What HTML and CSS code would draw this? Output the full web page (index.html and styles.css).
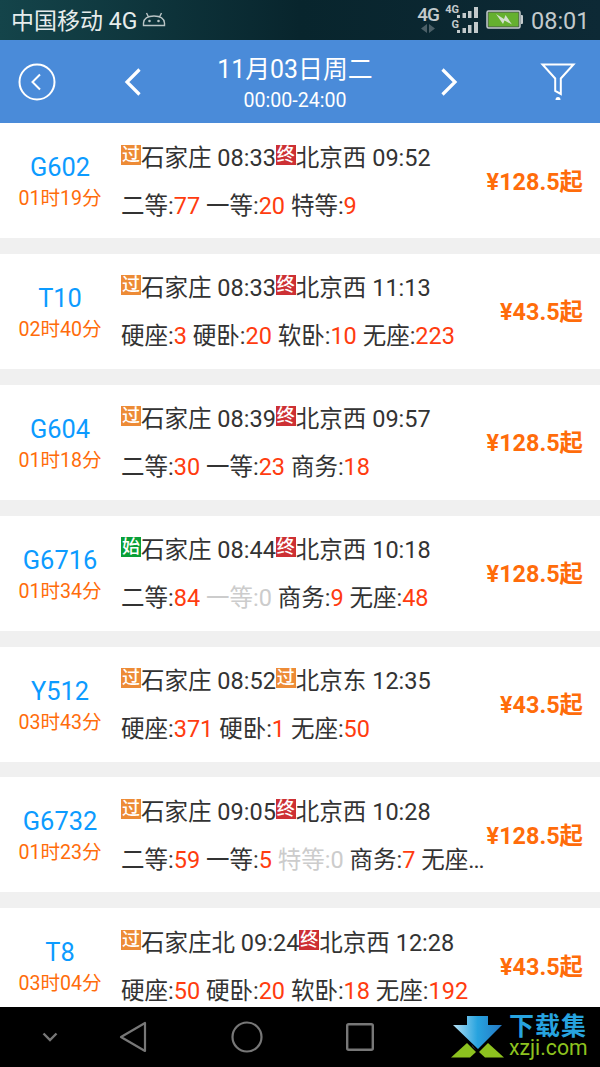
FILE: index.html
```html
<!DOCTYPE html>
<html lang="zh-CN">
<head>
  <meta charset="UTF-8">
  <title>车次列表</title>
  <link rel="stylesheet" href="styles.css">
</head>
<body>

  <div class="status-bar">
    <span class="carrier">中国移动 4G</span>
    <svg class="android" width="24" height="16" viewBox="0 0 24 16" fill="none" stroke="#b9c4c5" stroke-width="1.400">
      <path d="M1.500 13.500V11C2 6.500 6 4 12 4S22 6.500 22.500 11V13.500ZM6.500 5L4.500 1M17.500 5L19.500 1"/>
      <circle cx="7.500" cy="9" r=".6"/>
      <circle cx="16.500" cy="9" r=".6"/>
    </svg>
    <div class="network">
      <span>4G</span>
      <svg width="14" height="9" viewBox="0 0 14 9" fill="#4c6068"><path d="M6 0V9L0 4.500ZM8 0V9L14 4.500Z"/></svg>
    </div>
    <div class="signals">
      <div class="signal">
        <span>4G</span>
        <svg width="21" height="12" viewBox="0 0 21 12" fill="#c3cacc"><path d="M0 8h3v3H0zM5.500 6h3.500v5H5.500zM11 4h3.500v7h-3.500zM17 0h4v11h-4z"/></svg>
      </div>
      <div class="signal">
        <span>G</span>
        <svg width="21" height="12" viewBox="0 0 21 12" fill="#c3cacc"><path d="M0 8h3v3H0zM5.500 6h3.500v5H5.500zM11 3h3.500v8h-3.500zM17 0h4v11h-4z"/></svg>
      </div>
    </div>
    <svg class="battery" width="38" height="19" viewBox="0 0 38 19">
      <rect x="1" y="1" width="33" height="17" rx="1.500" fill="#46534f" stroke="#c3cacc" stroke-width="1.500"/>
      <rect x="2.500" y="2.500" width="30" height="14" fill="#65b02f"/>
      <path d="M35 5h1q1 0 1 1v7q0 1-1 1h-1z" fill="#c3cacc"/>
      <path d="M10 4L18 9L19.500 5L26 14.500L18.500 10.500L17 14Z" fill="#d3e0cd"/>
    </svg>
    <span class="clock">08:01</span>
  </div>

  <div class="header">
    <svg width="38" height="38" viewBox="0 0 38 38" fill="none" stroke="#fff" stroke-width="2">
      <circle cx="19" cy="19" r="17.500"/>
      <path d="M22 11.500L14.500 19L22 26.500"/>
    </svg>
    <svg class="prev" width="18" height="28" viewBox="0 0 18 28" fill="none" stroke="#fff" stroke-width="3.200"><path d="M15.500 1.500L3 14L15.500 26.500"/></svg>
    <div class="date">
      <div class="day">11月03日周二</div>
      <div class="hours">00:00-24:00</div>
    </div>
    <svg class="next" width="18" height="28" viewBox="0 0 18 28" fill="none" stroke="#fff" stroke-width="3.200"><path d="M2.500 1.500L15 14L2.500 26.500"/></svg>
    <svg class="filter" width="36" height="38" viewBox="0 0 36 38" fill="none" stroke="#fff" stroke-width="2">
      <path d="M2.500 1.500H33.500L20.800 15.500V31L15.200 28V15.500Z"/>
      <path d="M15.500 37q0-3 2.500-3t2.500 3z" fill="#fff" stroke="none"/>
    </svg>
  </div>

  <div class="list">
    <div class="train">
      <div class="train-no"><div class="no">G602</div><div class="time">01时19分</div></div>
      <div class="info">
        <div class="route"><i class="tag pass">过</i>石家庄 08:33<i class="tag end">终</i>北京西 09:52</div>
        <div class="seats">二等:<b>77</b> 一等:<b>20</b> 特等:<b>9</b></div>
      </div>
      <div class="price">¥128.5起</div>
    </div>

    <div class="train">
      <div class="train-no"><div class="no">T10</div><div class="time">02时40分</div></div>
      <div class="info">
        <div class="route"><i class="tag pass">过</i>石家庄 08:33<i class="tag end">终</i>北京西 11:13</div>
        <div class="seats">硬座:<b>3</b> 硬卧:<b>20</b> 软卧:<b>10</b> 无座:<b>223</b></div>
      </div>
      <div class="price">¥43.5起</div>
    </div>

    <div class="train">
      <div class="train-no"><div class="no">G604</div><div class="time">01时18分</div></div>
      <div class="info">
        <div class="route"><i class="tag pass">过</i>石家庄 08:39<i class="tag end">终</i>北京西 09:57</div>
        <div class="seats">二等:<b>30</b> 一等:<b>23</b> 商务:<b>18</b></div>
      </div>
      <div class="price">¥128.5起</div>
    </div>

    <div class="train">
      <div class="train-no"><div class="no">G6716</div><div class="time">01时34分</div></div>
      <div class="info">
        <div class="route"><i class="tag start">始</i>石家庄 08:44<i class="tag end">终</i>北京西 10:18</div>
        <div class="seats">二等:<b>84</b> <span class="none">一等:0</span> 商务:<b>9</b> 无座:<b>48</b></div>
      </div>
      <div class="price">¥128.5起</div>
    </div>

    <div class="train">
      <div class="train-no"><div class="no">Y512</div><div class="time">03时43分</div></div>
      <div class="info">
        <div class="route"><i class="tag pass">过</i>石家庄 08:52<i class="tag pass">过</i>北京东 12:35</div>
        <div class="seats">硬座:<b>371</b> 硬卧:<b>1</b> 无座:<b>50</b></div>
      </div>
      <div class="price">¥43.5起</div>
    </div>

    <div class="train">
      <div class="train-no"><div class="no">G6732</div><div class="time">01时23分</div></div>
      <div class="info">
        <div class="route"><i class="tag pass">过</i>石家庄 09:05<i class="tag end">终</i>北京西 10:28</div>
        <div class="seats">二等:<b>59</b> 一等:<b>5</b> <span class="none">特等:0</span> 商务:<b>7</b> 无座<span class="dots">...</span></div>
      </div>
      <div class="price">¥128.5起</div>
    </div>

    <div class="train">
      <div class="train-no"><div class="no">T8</div><div class="time">03时04分</div></div>
      <div class="info">
        <div class="route"><i class="tag pass">过</i>石家庄北 09:24<i class="tag end">终</i>北京西 12:28</div>
        <div class="seats">硬座:<b>50</b> 硬卧:<b>20</b> 软卧:<b>18</b> 无座:<b>192</b></div>
      </div>
      <div class="price">¥43.5起</div>
    </div>
  </div>

  <div class="nav-bar">
    <svg class="hide" width="16" height="10" viewBox="0 0 16 10" fill="none" stroke="#777" stroke-width="2.400"><path d="M1.500 1.500L8 8L14.500 1.500"/></svg>
    <svg class="back" width="28" height="32" viewBox="0 0 28 32" fill="none" stroke="#777" stroke-width="2.200" stroke-linejoin="round"><path d="M26 2V30L2 16Z"/></svg>
    <svg class="home" width="32" height="32" viewBox="0 0 32 32" fill="none" stroke="#777" stroke-width="2.200"><circle cx="16" cy="16" r="14.500"/></svg>
    <svg class="recent" width="28" height="28" viewBox="0 0 28 28" fill="none" stroke="#777" stroke-width="2.400"><rect x="1.200" y="1.200" width="25.600" height="25.600" rx="1.500"/></svg>
    <svg class="logo" width="53" height="42" viewBox="0 0 53 42">
      <defs>
        <linearGradient id="arrow" x1="0" y1="0" x2="1" y2="0">
          <stop offset="0" stop-color="#b5e0f3"/>
          <stop offset=".5" stop-color="#27a3df"/>
          <stop offset="1" stop-color="#2478c4"/>
        </linearGradient>
      </defs>
      <path d="M16 27L25 36L19 41.500H0Z" fill="#8dc21f"/>
      <path d="M37 27L53 41.500H34L28 36Z" fill="#8dc21f"/>
      <path d="M20 28L25 34L22 31Z" fill="#888"/>
      <path d="M16 0H37V9H51L27 33L2 9H16Z" fill="url(#arrow)"/>
    </svg>
    <div class="site">
      <div class="site-name">下载集</div>
      <div class="site-url">xzji.com</div>
    </div>
  </div>

</body>
</html>
```

FILE: styles.css
```css
* {
  box-sizing: border-box;
}
body {
  margin: 0;
  height: 1067px;
  display: flex;
  flex-direction: column;
  overflow: hidden;
  background: #f0f0f0;
  font-family: Roboto, "Noto Sans CJK SC", sans-serif;
  color: #333;
  white-space: nowrap;
}
svg {
  display: block;
  flex: none;
}

/* status bar */
.status-bar {
  height: 40px;
  flex: none;
  display: flex;
  align-items: center;
  padding: 0 11px;
  background: linear-gradient(90deg, #14444a, #08252d 50%, #0d2935);
  color: #c3cacc;
}
.carrier {
  width: 131px;
  padding-top: 3px;
  font-size: 23px;
  line-height: 37px;
  color: #e6ecec;
}
.network {
  margin-left: auto;
  display: flex;
  flex-direction: column;
  align-items: center;
  font-size: 19px;
  font-weight: 500;
  line-height: 18px;
  letter-spacing: -1px;
  padding-bottom: 2px;
}
.signals {
  width: 34px;
  margin: 0 8px 0 5px;
}
.signal {
  height: 15px;
  display: flex;
  justify-content: flex-end;
  align-items: center;
  font-size: 11px;
  font-weight: 700;
  line-height: 9px;
}
.signal span {
  align-self: flex-start;
  margin-right: -2px;
}
.battery {
  margin-top: -1px;
}
.clock {
  width: 58px;
  margin-left: 7px;
  padding-top: 2px;
  font-size: 23.5px;
}

/* header */
.header {
  height: 83px;
  flex: none;
  display: flex;
  align-items: center;
  padding: 0 24px 0 18px;
  background: #4a8bd9;
  color: #fff;
}
.prev {
  margin-left: 68px;
}
.date {
  width: 298px;
  padding: 5px 0 0 8px;
  text-align: center;
}
.day {
  font-size: 24.9px;
  line-height: 33px;
}
.hours {
  font-size: 19.6px;
  line-height: 29px;
}
.filter {
  margin-left: auto;
}

/* trains */
.list {
  height: 884px;
  flex: none;
  overflow: hidden;
}
.train {
  height: 115px;
  margin-bottom: 15.9px;
  display: flex;
  align-items: center;
  padding-right: 17px;
  background: #fff;
}
.train-no {
  width: 120px;
  padding-top: 4px;
  text-align: center;
}
.no {
  font-size: 25.4px;
  line-height: 32px;
  color: #0c9bff;
}
.time {
  font-size: 19.6px;
  line-height: 31px;
  color: #ff6c0a;
}
.info {
  width: 364px;
  padding: 2px 0 0 1px;
  font-size: 23.5px;
}
.route {
  height: 48px;
  line-height: 34px;
}
.seats {
  height: 34px;
  line-height: 34px;
}
.seats b {
  font-weight: 400;
  color: #ff3c0f;
}
.none {
  color: #ccc;
}
.dots {
  letter-spacing: -1px;
}
.tag {
  display: inline-block;
  width: 20px;
  height: 20px;
  margin-top: -6px;
  vertical-align: 5px;
  font-size: 18px;
  font-style: normal;
  font-weight: 500;
  line-height: 19px;
  text-align: center;
  color: #fff;
}
.pass {
  background: #ed8b36;
}
.start {
  background: #0a9f37;
}
.end {
  background: #cd3034;
}
.price {
  margin-left: auto;
  padding-bottom: 2px;
  font-size: 23.4px;
  font-weight: 700;
  color: #ff6c0a;
}

/* navigation bar */
.nav-bar {
  height: 60px;
  flex: none;
  display: flex;
  align-items: center;
  padding-left: 42px;
  background: #000;
}
.back {
  margin-left: 61px;
}
.home {
  margin-left: 84px;
}
.recent {
  margin-left: 83px;
}
.logo {
  margin-left: 77px;
}
.site {
  margin-left: 5px;
}
.site-name {
  font-size: 25px;
  font-weight: 700;
  letter-spacing: 1px;
  line-height: 22px;
  color: #27a3df;
}
.site-url {
  font-size: 21.2px;
  line-height: 20px;
  color: #8dc21f;
}
```
